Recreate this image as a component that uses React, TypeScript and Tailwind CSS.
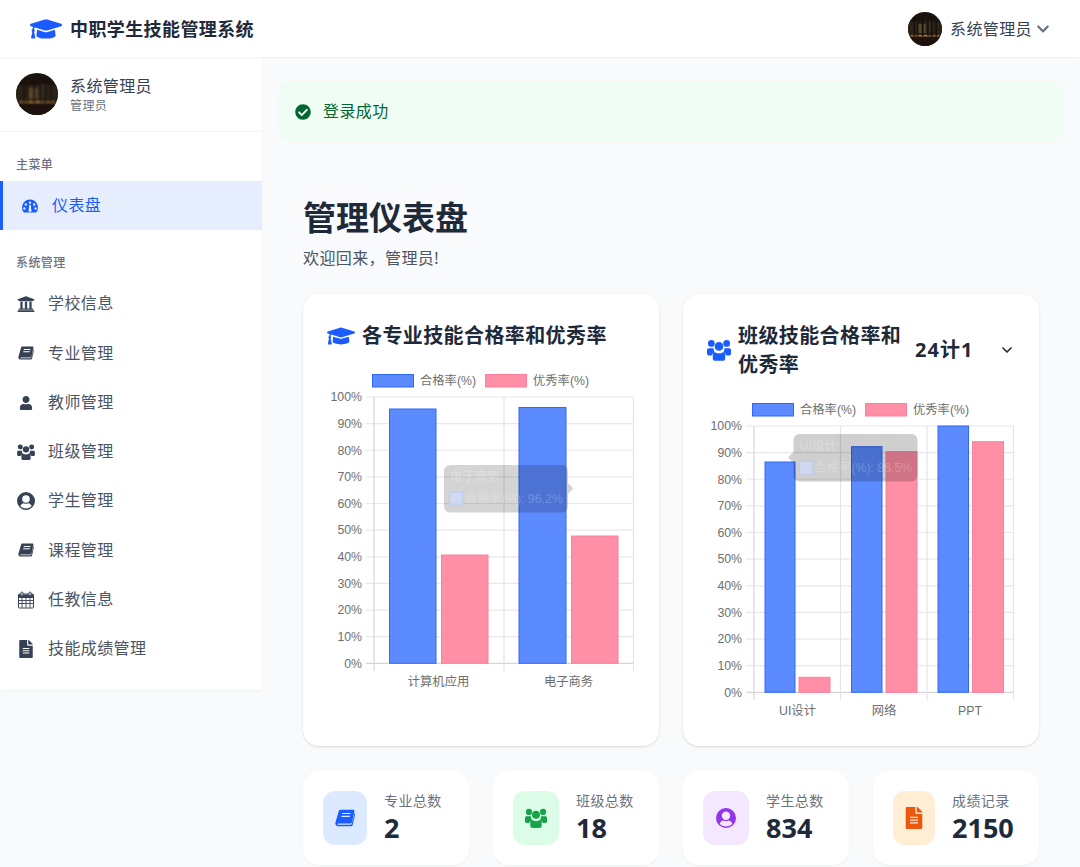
import React from "react";
import { FaGraduationCap, FaUser, FaUniversity, FaCheckCircle, FaChevronDown, FaFileAlt } from "react-icons/fa";
import { LuChevronDown } from "react-icons/lu";

const FONT = '"Noto Sans", "Noto Sans CJK SC", sans-serif';
const CHART_FONT = '"Liberation Sans", "Noto Sans CJK SC", sans-serif';

function Avatar({ className, id }: { className: string; id: string }) {
  const trunks = [
    { x: 7, w: 2 },
    { x: 11.500, w: 1.400 },
    { x: 17, w: 2.200 },
    { x: 24, w: 1.600 },
    { x: 28, w: 2.400 },
    { x: 34, w: 1.600 },
  ];
  return (
    <svg viewBox="0 0 42 42" className={className}>
      <defs>
        <clipPath id={id}><circle cx="21" cy="21" r="21" /></clipPath>
        <filter id={`${id}b`}><feGaussianBlur stdDeviation="0.900" /></filter>
      </defs>
      <g clipPath={`url(#${id})`}>
        <rect width="42" height="42" fill="#1b130e" />
        <g filter={`url(#${id}b)`}>
          <rect x="0" y="12" width="42" height="15" fill="#2a2316" />
          <rect x="12" y="15" width="10" height="11" fill="#57492a" />
          <rect x="25" y="11" width="6" height="14" fill="#3a3525" />
          <rect x="3" y="28" width="36" height="2.500" fill="#7c5a30" />
          <rect x="13" y="28.500" width="13" height="1.400" fill="#a87d44" />
          {trunks.map((b) => (
            <rect key={b.x} x={b.x} y="6" width={b.w} height="24" fill="#150f0b" />
          ))}
        </g>
        <rect y="31.500" width="42" height="10.500" fill="#1f110e" />
      </g>
    </svg>
  );
}

function SlantBook({ className }: { className?: string }) {
  return (
    <svg viewBox="0 0 18 16" className={className} fill="currentColor">
      <path d="M5 0.5H16.4c0.9 0 1.3 0.7 1.1 1.5L15.3 11.6c-0.2 0.9-0.9 1.4-1.8 1.4H3.2c-0.9 0-1.1 0.9-0.4 1H14c0.5 0 0.9-0.3 1.1-0.8L17.6 3.6c0.5 0.3 0.6 0.9 0.4 1.5L15.9 14.2c-0.2 0.8-0.9 1.3-1.7 1.3H3C1.3 15.5 0 14.2 0.3 12.6c0-0.3 0.1-0.5 0.2-0.8L3.4 1.7C3.6 1 4.2 0.5 5 0.5ZM6.6 3.5l-0.3 1h7.6l0.3-1ZM6 6l-0.3 1h7.6l0.3-1Z" fillRule="evenodd" />
    </svg>
  );
}

function Gauge({ className }: { className?: string }) {
  return (
    <svg viewBox="0 0 16 13" className={className} fill="currentColor">
      <path fillRule="evenodd" d="M8 0a8 8 0 0 1 8 8c0 1.8-.6 3.4-1.5 4.6-.2.2-.4.4-.7.4H2.2c-.3 0-.5-.2-.7-.4C.6 11.400 0 9.800 0 8a8 8 0 0 1 8-8ZM8 2a1.200 1.200 0 1 0 0 2.400A1.200 1.200 0 0 0 8 2ZM3.800 3.800a1.200 1.200 0 1 0 0 2.400 1.200 1.200 0 0 0 0-2.400ZM12.200 3.800a1.200 1.200 0 1 0 0 2.400 1.200 1.200 0 0 0 0-2.400ZM2.400 7.800a1.200 1.200 0 1 0 0 2.400 1.200 1.200 0 0 0 0-2.400ZM13.600 7.800a1.200 1.200 0 1 0 0 2.400 1.200 1.200 0 0 0 0-2.400ZM7.200 5.500l-.4 4.200a1.600 1.600 0 1 0 2.400 0l-.4-4.200Z" />
    </svg>
  );
}

function Users3({ className }: { className?: string }) {
  const side = "M0 9c0-.9.7-1.500 1.500-1.500h3c.4 0 .8.100 1.100.3-.2 1.200.2 2.300.9 3.100-1.300.6-2.200 1.500-2.700 2.600H1.300C.6 13.500 0 12.900 0 12.200Z";
  return (
    <svg viewBox="0 0 20 18" className={className} fill="currentColor">
      <circle cx="3.600" cy="3.500" r="2.800" />
      <circle cx="16.400" cy="3.500" r="2.800" />
      <circle cx="10" cy="6" r="3.600" />
      <path d={side} />
      <path d={side} transform="matrix(-1 0 0 1 20 0)" />
      <path d="M4.800 12.500C4.800 11.200 6 10.500 7 11c.9.500 1.900.800 3 .800s2.100-.300 3-.800c1-.500 2.200.200 2.200 1.500V16c0 1.100-.9 2-2 2H6.800c-1.100 0-2-.9-2-2Z" />
    </svg>
  );
}

function UserRing({ className }: { className?: string }) {
  return (
    <svg viewBox="0 0 18 18" className={className} fill="currentColor">
      <path
        fillRule="evenodd"
        d="M9 0a9 9 0 1 1 0 18A9 9 0 0 1 9 0ZM9 3.200a3.800 3.800 0 1 0 0 7.600 3.800 3.800 0 0 0 0-7.600ZM3.300 14.100c1.400 1.600 3.400 2.500 5.700 2.500s4.300-.9 5.700-2.500c-.8-1.900-2.300-2.900-3.500-2.900-.7.400-1.400.6-2.200.6s-1.500-.2-2.200-.6c-1.200 0-2.700 1-3.500 2.900Z"
      />
    </svg>
  );
}

function Calendar({ className }: { className?: string }) {
  return (
    <svg viewBox="0 0 16 17" className={className} fill="none" stroke="currentColor">
      <rect x="0.500" y="2.500" width="15" height="14" rx="1" />
      <path d="M0.500 3.500h15V6h-15Z" fill="currentColor" />
      <path d="M0.500 9h15M0.500 12h15M4 6v10M8 6v10M12 6v10" strokeWidth="0.900" />
      <rect x="3" y="0.500" width="2" height="4" rx="1" fill="#fff" strokeWidth="1" />
      <rect x="11" y="0.500" width="2" height="4" rx="1" fill="#fff" strokeWidth="1" />
    </svg>
  );
}

type Bar = { x: number; w: number; top: number; pink?: boolean };
type Tip = { x: number; y: number; side: "left" | "right"; title: string; text: string; alpha: number };

function Chart({ vlines, bars, labels, tip, legend2 }: { vlines: number[]; bars: Bar[]; labels: { x: number; t: string }[]; tip: Tip; legend2: number }) {
  const yOf = (p: number) => 31 + 266.3 * (1 - p / 100);
  const ticks = [0, 10, 20, 30, 40, 50, 60, 70, 80, 90, 100];
  const t = tip;
  const caret =
    t.side === "right"
      ? `M${t.x + 124} ${t.y + 18} L${t.x + 129.500} ${t.y + 23.500} L${t.x + 124} ${t.y + 29} Z`
      : `M${t.x} ${t.y + 18} L${t.x - 5.500} ${t.y + 23.500} L${t.x} ${t.y + 29} Z`;
  return (
    <svg viewBox="0 0 308 327" className="block h-auto w-full tracking-normal" style={{ fontFamily: CHART_FONT }}>
      {ticks.map((p) => (
        <g key={p}>
          <line x1="39" x2="306.500" y1={yOf(p)} y2={yOf(p)} stroke={p === 0 ? "#d6d6d6" : "#e8e8e8"} strokeWidth="1.200" />
          <text x="35" y={yOf(p) + 4.300} textAnchor="end" fontSize="12.300" fill="#6e6e6e">{p}%</text>
        </g>
      ))}
      {vlines.map((x, i) => (
        <line key={x} x1={x} x2={x} y1="31" y2="305" stroke={i === 0 ? "#d6d6d6" : "#e4e4e4"} strokeWidth="1.200" />
      ))}
      {bars.map((b, i) => (
        <rect
          key={i}
          x={b.x}
          y={b.top}
          width={b.w}
          height={297.300 - b.top}
          fill={b.pink ? "#ff8fa7" : "#5c8bff"}
          stroke={b.pink ? "#ff7f9c" : "#2f68ff"}
          strokeWidth="1"
        />
      ))}
      <rect x="45.500" y="8.500" width="41" height="12.500" fill="#5c8bff" stroke="#2f68ff" />
      <text x="93" y="19" fontSize="12.300" fill="#6e6e6e">合格率(%)</text>
      <rect x={legend2} y="8.500" width="41" height="12.500" fill="#ff8fa7" stroke="#ff7f9c" />
      <text x={legend2 + 47.500} y="19" fontSize="12.300" fill="#6e6e6e">优秀率(%)</text>
      {labels.map((l) => (
        <text key={l.t} x={l.x} y="320" textAnchor="middle" fontSize="12.300" fill="#6e6e6e">{l.t}</text>
      ))}
      <rect x={t.x} y={t.y} width="124" height="47.500" rx="6" fill="#000" fillOpacity={t.alpha} />
      <path d={caret} fill="#000" fillOpacity={t.alpha} />
      <text x={t.x + 6} y={t.y + 16} fontSize="12.300" fontWeight="700" fill="#fff" fillOpacity="0.220">{t.title}</text>
      <rect x={t.x + 5.800} y={t.y + 27.200} width="13" height="13" fill="#cfd9f5" fillOpacity="0.850" stroke="#bccbf2" />
      <text x={t.x + 21} y={t.y + 37.500} fontSize="12.300" fill="#fff" fillOpacity="0.220">{t.text}</text>
    </svg>
  );
}

const nav = [
  { t: "学校信息", i: <FaUniversity className="size-4.5" /> },
  { t: "专业管理", i: <SlantBook className="h-3.5 w-4" /> },
  { t: "教师管理", i: <FaUser className="size-3.5" /> },
  { t: "班级管理", i: <Users3 className="h-4 w-4.5" /> },
  { t: "学生管理", i: <UserRing className="size-4.5" /> },
  { t: "课程管理", i: <SlantBook className="h-3.5 w-4" /> },
  { t: "任教信息", i: <Calendar className="h-4.5 w-4" /> },
  { t: "技能成绩管理", i: <FaFileAlt className="size-4.5" /> },
];

const stats = [
  { l: "专业总数", v: "2", bg: "bg-blue-100", w: "w-11", c: "text-[#1a5cff]", i: <SlantBook className="h-4.5 w-5" /> },
  { l: "班级总数", v: "18", bg: "bg-green-100", w: "w-11.5", c: "text-[#16a34a]", i: <Users3 className="size-5.5" /> },
  { l: "学生总数", v: "834", bg: "bg-purple-100", w: "w-11.5", c: "text-[#9333ea]", i: <UserRing className="size-5" /> },
  { l: "成绩记录", v: "2150", bg: "bg-orange-100", w: "w-10.5", c: "text-[#ea580c]", i: <FaFileAlt className="size-5.5" /> },
];

export default function App() {
  return (
    <div className="h-screen overflow-hidden bg-gray-50 tracking-wide text-gray-800" style={{ fontFamily: FONT }}>
      <header className="relative z-10 flex h-14.25 items-center justify-between bg-white pl-7.5 pr-7.5 shadow-xs">
        <div className="flex items-center gap-2">
          <FaGraduationCap className="size-8 text-[#1a5cff]" />
          <span className="text-lg font-bold text-gray-800">中职学生技能管理系统</span>
        </div>
        <div className="flex items-center gap-2 text-gray-700">
          <Avatar id="a1" className="size-8.5" />
          <span className="flex items-center gap-1 text-base">
            系统管理员
            <FaChevronDown className="size-3.5 text-gray-500" />
          </span>
        </div>
      </header>
      <div className="flex items-start">
        <aside className="w-[262px] shrink-0 bg-white shadow-xs">
          <div className="flex items-center gap-3 border-b border-gray-100 p-4">
            <Avatar id="a2" className="size-10.5" />
            <div>
              <div className="text-base leading-6 text-gray-700">系统管理员</div>
              <div className="text-xs leading-4 text-gray-500">管理员</div>
            </div>
          </div>
          <div className="px-4 pb-1.75 pt-6 text-xs font-medium leading-4.5 text-gray-500">主菜单</div>
          <div className="relative flex items-center gap-3 bg-[#e6edfd] py-3 pl-5 leading-[25.3px] text-[#1a5cff]">
            <span className="absolute inset-y-0 left-0 w-0.75 bg-[#1a5cff]" />
            <span className="flex w-5 justify-center"><Gauge className="h-3.5 w-4" /></span>
            <span>仪表盘</span>
          </div>
          <div className="px-4 pb-1.75 pt-6 text-xs font-medium leading-4.5 text-gray-500">系统管理</div>
          <nav className="pb-4">
            {nav.map((n) => (
              <div key={n.t} className="flex items-center gap-3 px-4 py-3 leading-[25.3px] text-gray-600">
                <span className="flex w-5 justify-center text-gray-700">{n.i}</span>
                <span>{n.t}</span>
              </div>
            ))}
          </nav>
        </aside>
        <main className="min-w-0 flex-1 px-4 pt-6">
          <div className="flex items-center gap-3 rounded-xl bg-green-50 px-4.25 py-4.5 leading-[25.3px] text-green-800">
            <FaCheckCircle className="size-4" />
            <span>登录成功</span>
          </div>
          <div className="px-[25px]">
            <h1 className="mt-14 text-[33px] font-bold leading-10 tracking-normal text-gray-800">管理仪表盘</h1>
            <p className="mt-2 text-base leading-6 text-gray-600">欢迎回来，管理员!</p>
            <div className="mt-6 grid grid-cols-2 gap-6">
              <section className="rounded-2xl bg-white p-6 shadow-sm">
                <div className="mb-4 flex items-center gap-1.75 pt-0.75">
                  <FaGraduationCap className="size-7 text-[#1a5cff]" />
                  <h2 className="text-xl font-bold leading-7.25 text-gray-800">各专业技能合格率和优秀率</h2>
                </div>
                <Chart
                  vlines={[47, 177, 306.500]}
                  legend2={158.500}
                  bars={[
                    { x: 62.500, w: 46.500, top: 43 },
                    { x: 114.500, w: 46.500, top: 189, pink: true },
                    { x: 192, w: 47, top: 41.500 },
                    { x: 244.500, w: 46.500, top: 170, pink: true },
                  ]}
                  labels={[{ x: 111.500, t: "计算机应用" }, { x: 241.500, t: "电子商务" }]}
                  tip={{ x: 117, y: 99, side: "right", title: "电子商务", text: "合格率(%): 96.2%", alpha: 0.17 }}
                />
              </section>
              <section className="rounded-2xl bg-white p-6 shadow-sm">
                <div className="mb-4 flex items-center justify-between pt-0.75">
                  <div className="flex items-center gap-1.75">
                    <Users3 className="h-5.5 w-6 shrink-0 text-[#1a5cff]" />
                    <h2 className="text-xl font-bold leading-7.25 text-gray-800">班级技能合格率和优秀率</h2>
                  </div>
                  <div className="flex w-28 shrink-0 items-center justify-between pl-3 text-xl font-bold tracking-wider text-gray-800">
                    <span>24计1</span>
                    <LuChevronDown className="size-4 text-gray-800" strokeWidth={2.5} />
                  </div>
                </div>
                <Chart
                  vlines={[47, 133.500, 220, 306.500]}
                  legend2={158.500}
                  bars={[
                    { x: 58, w: 30, top: 67 },
                    { x: 92, w: 31, top: 282.300, pink: true },
                    { x: 144.500, w: 30.500, top: 51.700 },
                    { x: 179, w: 31, top: 56.700, pink: true },
                    { x: 231, w: 30.500, top: 31 },
                    { x: 265.500, w: 31, top: 46.700, pink: true },
                  ]}
                  labels={[{ x: 90.500, t: "UI设计" }, { x: 177, t: "网络" }, { x: 263, t: "PPT" }]}
                  tip={{ x: 86.500, y: 39, side: "left", title: "UI设计", text: "合格率(%): 86.5%", alpha: 0.19 }}
                />
              </section>
            </div>
            <div className="mt-6.25 grid grid-cols-4 gap-6">
              {stats.map((s) => (
                <div key={s.l} className="flex gap-4.25 rounded-2xl bg-white p-5 shadow-xs">
                  <div className={`${s.w} ${s.bg} ${s.c} flex shrink-0 items-center justify-center rounded-xl`}>{s.i}</div>
                  <div>
                    <div className="text-sm leading-5 text-gray-500">{s.l}</div>
                    <div className="text-[27px] font-bold leading-8.5 tracking-normal text-gray-800">{s.v}</div>
                  </div>
                </div>
              ))}
            </div>
          </div>
        </main>
      </div>
    </div>
  );
}
